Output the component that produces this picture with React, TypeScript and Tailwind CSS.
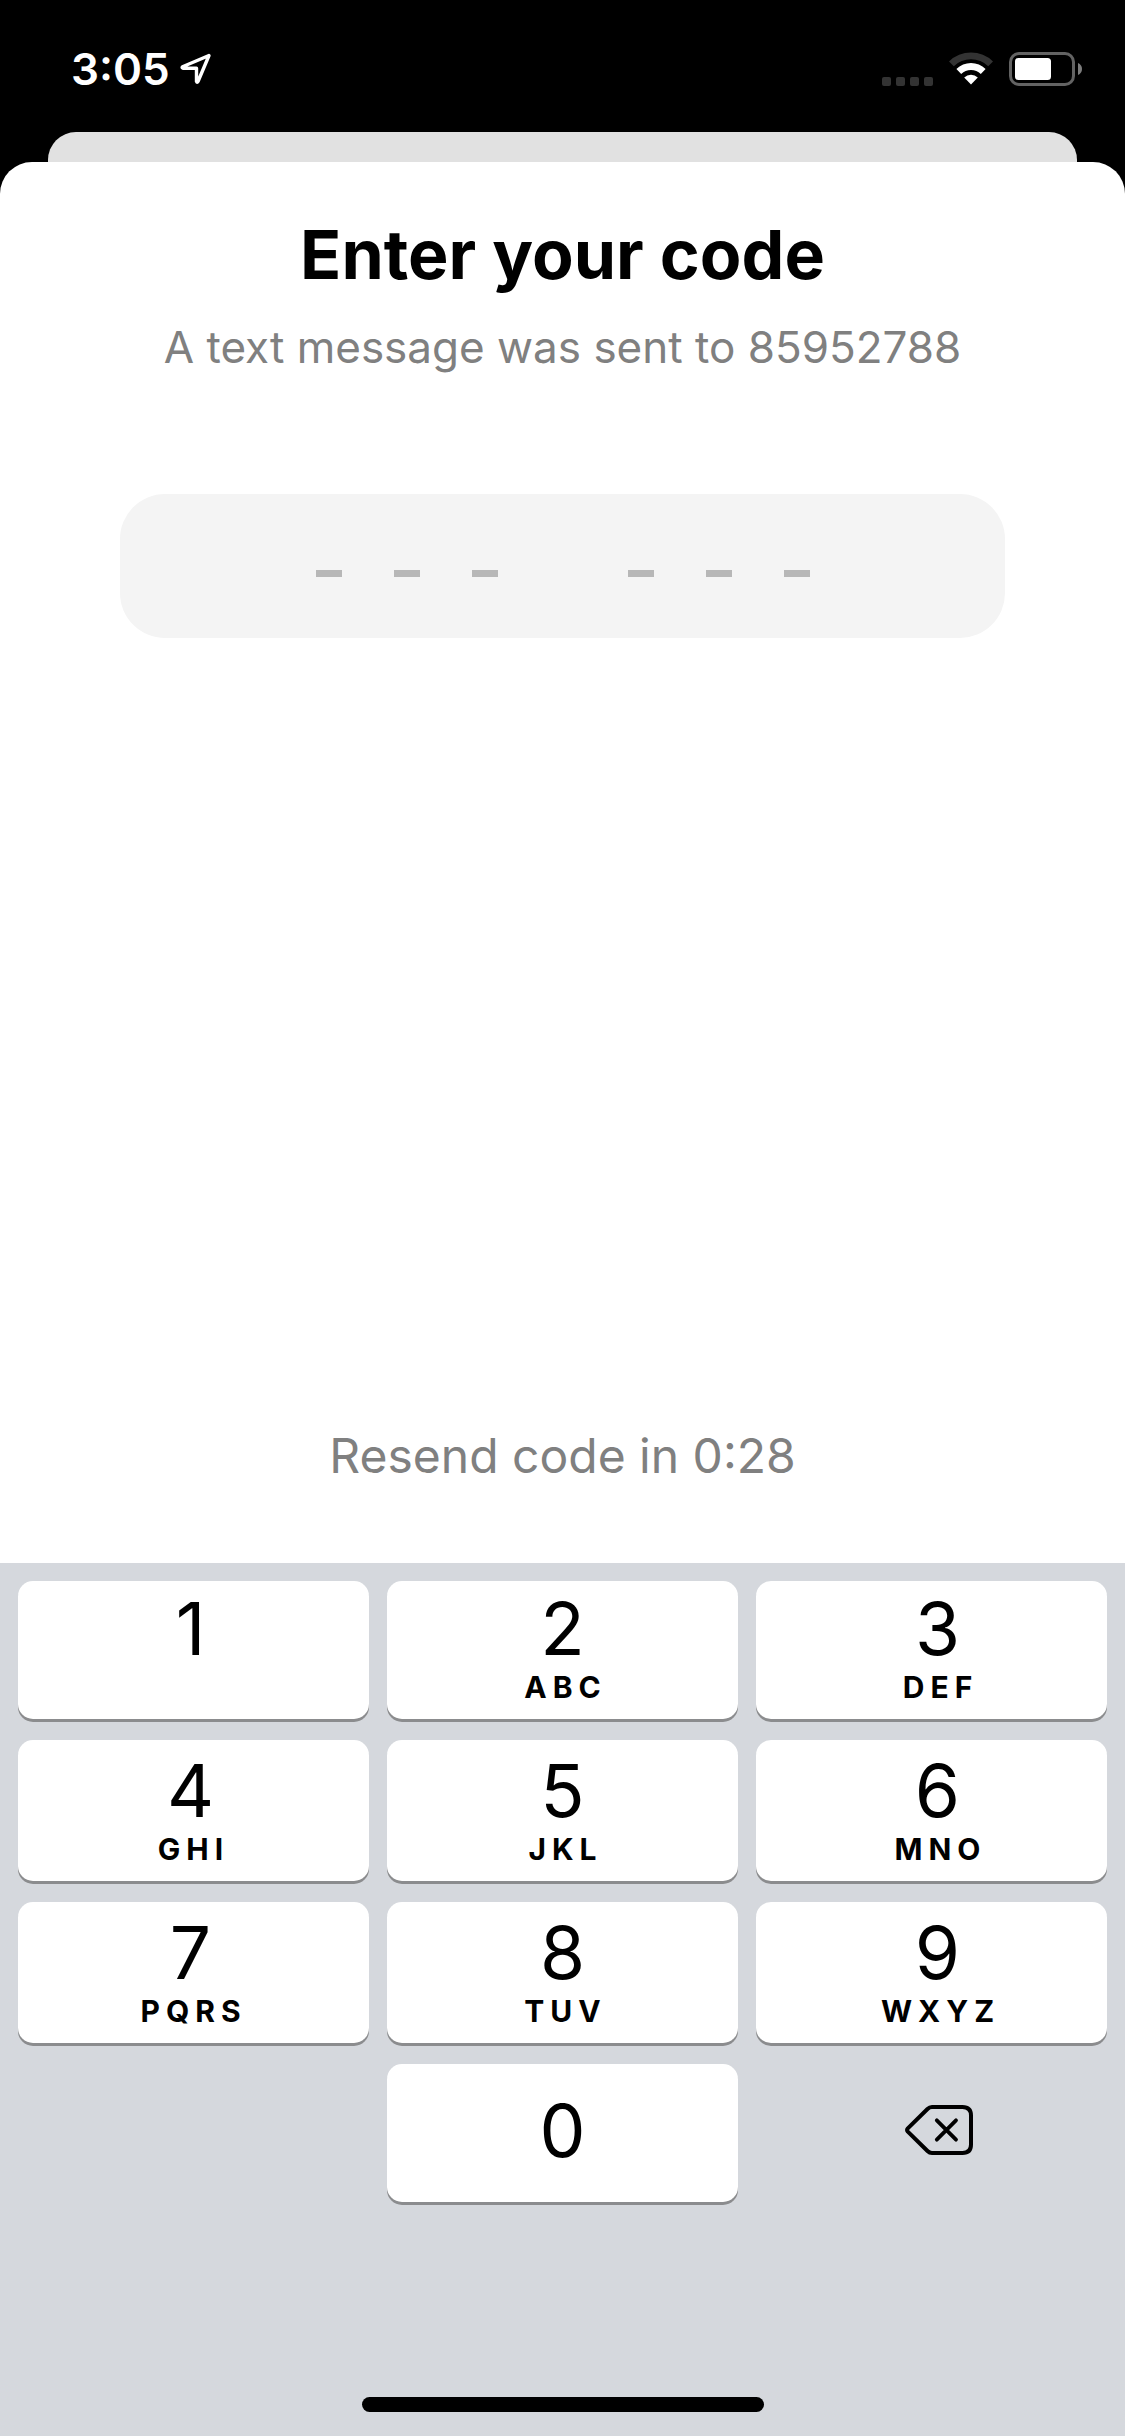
import { useState } from "react";
import { twJoin } from "tailwind-merge";

interface IKey {
  digit: string;
  letters?: string;
}

const KEY_ROWS: IKey[][] = [
  [
    { digit: "1", letters: "" },
    { digit: "2", letters: "ABC" },
    { digit: "3", letters: "DEF" },
  ],
  [
    { digit: "4", letters: "GHI" },
    { digit: "5", letters: "JKL" },
    { digit: "6", letters: "MNO" },
  ],
  [
    { digit: "7", letters: "PQRS" },
    { digit: "8", letters: "TUV" },
    { digit: "9", letters: "WXYZ" },
  ],
];

// outer columns lean slightly off centre, like the system keypad
const COLUMN_INSETS = ["pr-[6px]", "", "pl-[12px]"];

const CODE_LENGTH = 6;

function App() {
  const [code, setCode] = useState<string>("");

  const handleChange = (value: string) => {
    setCode(value.replace(/\D/g, "").slice(0, CODE_LENGTH));
  };

  return (
    <div className="w-full min-h-screen flex flex-col bg-black font-['Inter','Liberation_Sans',sans-serif]">
      <StatusBar />

      {/* Edge of the card below the sheet */}
      <div className="h-[30px] mx-12 rounded-t-[28px] bg-[#e1e1e1]" />

      <main className="flex-1 flex flex-col items-center pt-[52px] pb-[77px] rounded-t-[32px] bg-white">
        <h1 className="text-black text-[68px] font-bold leading-[80px]">
          Enter your code
        </h1>
        <p className="mt-6 text-[#808080] text-[44px] leading-[58px]">
          A text message was sent to 85952788
        </p>
        <div className="w-full px-[120px] mt-[118px]">
          <CodeField code={code} onChange={handleChange} />
        </div>
        <p className="mt-auto text-[#808080] text-[48px] leading-[60px]">
          Resend code in 0:28
        </p>
      </main>

      <Keypad
        onDigit={(digit) => handleChange(code + digit)}
        onDelete={() => setCode(code.slice(0, -1))}
      />
    </div>
  );
}

export default App;

const StatusBar = () => (
  <header className="h-[132px] flex flex-row items-center justify-between pt-[6px] pl-[71px] pr-[43px]">
    <div className="flex flex-row items-center gap-[10px]">
      <span className="text-white text-[44px] font-semibold leading-[48px]">
        3:05
      </span>
      <svg className="w-[32px] h-[32px]" viewBox="0 0 32 32" fill="none">
        <path
          d="M29 2.500 2.500 13.800q-1 .9.400 1.400H16.500V28.500q.6 1.600 1.500 0Z"
          stroke="white"
          strokeWidth="3.4"
          strokeLinejoin="round"
        />
      </svg>
    </div>

    <div className="h-[34px] flex flex-row items-end">
      <div className="flex flex-row gap-[5px] mr-4">
        {[0, 1, 2, 3].map((dot) => (
          <div key={dot} className="w-[9px] h-[9px] rounded-[2px] bg-[#333333]" />
        ))}
      </div>
      <svg className="w-[44px] h-[34px] mr-4" viewBox="0 0 44 34">
        <path
          d="M0 9.4a31.5 31.5 0 0 1 44 0L39.2 14.2a24.7 24.7 0 0 0-34.4 0Z"
          fill="#333333"
        />
        <path
          d="M7.4 17a20.8 20.8 0 0 1 29.2 0L31.8 22a14 14 0 0 0-19.6 0Z"
          fill="white"
        />
        <path d="M15.2 25.4a10 10 0 0 1 13.6 0L22 32.6Z" fill="white" />
      </svg>
      <svg className="w-[73px] h-[34px]" viewBox="0 0 73 34">
        <rect
          x="1.5"
          y="1.5"
          width="63"
          height="31"
          rx="8.5"
          fill="none"
          stroke="#636363"
          strokeWidth="3"
        />
        <rect x="6" y="6" width="36" height="22" rx="3.5" fill="white" />
        <path d="M69 11q4 1.8 4 6t-4 6Z" fill="#7d7d7d" />
      </svg>
    </div>
  </header>
);

const CodeField = ({
  code,
  onChange,
}: {
  code: string;
  onChange: (value: string) => void;
}) => (
  <div className="relative w-full h-[144px] flex flex-row items-center justify-center gap-[130px] rounded-[45px] bg-[#f4f4f4]">
    {[0, 3].map((start) => (
      <div key={start} className="flex flex-row gap-[52px]">
        {[0, 1, 2].map((offset) => (
          <CodeSlot key={offset} value={code[start + offset]} />
        ))}
      </div>
    ))}
    {/* Real field lies over the drawn slots */}
    <input
      className="absolute inset-0 w-full h-full rounded-[45px] bg-transparent text-transparent caret-transparent outline-none"
      type="text"
      inputMode="numeric"
      autoComplete="one-time-code"
      aria-label="Verification code"
      value={code}
      onChange={(e) => onChange(e.target.value)}
    />
  </div>
);

const CodeSlot = ({ value }: { value?: string }) => (
  <div className="w-[26px] h-[60px] flex items-center justify-center pt-[14px]">
    {value ? (
      <span className="text-black text-[44px] leading-[60px]">{value}</span>
    ) : (
      <div className="w-full h-[7px] bg-[#b7b7b7]" />
    )}
  </div>
);

const Keypad = ({
  onDigit,
  onDelete,
}: {
  onDigit: (digit: string) => void;
  onDelete: () => void;
}) => (
  <section
    aria-label="Keypad"
    className="w-full flex flex-col items-center px-[18px] pt-[18px] pb-6 bg-[#d5d8dd]"
  >
    <div className="w-full grid grid-cols-3 gap-x-[18px] gap-y-[21px]">
      {KEY_ROWS.map((row, rowIndex) =>
        row.map((item, column) => (
          <Key
            key={item.digit}
            item={item}
            className={twJoin(
              rowIndex === 0 ? "h-[138px] pb-[6px]" : "h-[141px] pb-1",
              COLUMN_INSETS[column]
            )}
            onPress={onDigit}
          />
        ))
      )}
      <Key
        item={{ digit: "0" }}
        className="col-start-2 h-[138px] pb-1"
        onPress={onDigit}
      />
      <button
        type="button"
        aria-label="Delete"
        className="h-[138px] flex items-center justify-center pl-[15px] pb-[6px] cursor-pointer"
        onClick={onDelete}
      >
        <svg className="w-[68px] h-[50px]" viewBox="0 0 68 50" fill="none">
          <path
            d="M27 2H57.5Q66 2 66 10.5V39.5Q66 48 57.5 48H27Q24.5 48 22.5 46L2.8 26.6Q1.4 25 2.8 23.4L22.5 4Q24.5 2 27 2Z"
            stroke="black"
            strokeWidth="4"
            strokeLinejoin="round"
          />
          <path
            d="M31.8 15.3 51 34.7M51 15.3 31.8 34.7"
            stroke="black"
            strokeWidth="3.8"
            strokeLinecap="round"
          />
        </svg>
      </button>
    </div>

    {/* Home indicator */}
    <div className="w-[402px] h-[15px] mt-[195px] rounded-full bg-black" />
  </section>
);

const Key = ({
  item,
  className,
  onPress,
}: {
  item: IKey;
  className: string;
  onPress: (digit: string) => void;
}) => (
  <button
    type="button"
    className={twJoin(
      "cursor-pointer flex flex-col items-center justify-center",
      "rounded-[15px] bg-white text-black shadow-[0_3px_0_#8b8c8e]",
      "active:bg-gray-300",
      className
    )}
    onClick={() => onPress(item.digit)}
  >
    <span className="text-[73px] leading-[80px]">{item.digit}</span>
    {item.letters !== undefined && (
      <span className="h-[36px] pl-[6px] text-[30px] font-bold leading-[36px] tracking-[6px]">
        {item.letters}
      </span>
    )}
  </button>
);
